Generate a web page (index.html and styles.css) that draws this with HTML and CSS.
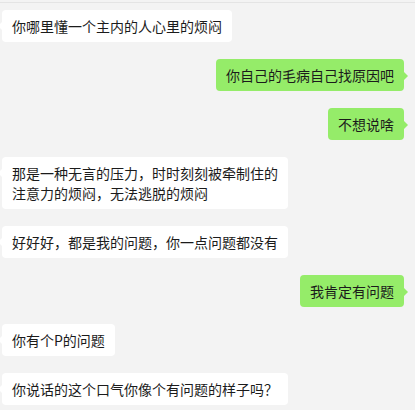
FILE: index.html
```html
<!DOCTYPE html>
<html lang="zh-CN">
<head>
    <meta charset="UTF-8">
    <meta name="viewport" content="width=device-width, initial-scale=1.0">
    <title>聊天记录</title>
    <link rel="stylesheet" href="styles.css">
</head>
<body>
    <div class="chat">
        <div class="row left"><div class="bubble">你哪里懂一个主内的人心里的烦闷</div></div>
        <div class="row right"><div class="bubble">你自己的毛病自己找原因吧</div></div>
        <div class="row right"><div class="bubble">不想说啥</div></div>
        <div class="row left"><div class="bubble">那是一种无言的压力，时时刻刻被牵制住的注意力的烦闷，无法逃脱的烦闷</div></div>
        <div class="row left"><div class="bubble">好好好，都是我的问题，你一点问题都没有</div></div>
        <div class="row right"><div class="bubble">我肯定有问题</div></div>
        <div class="row left"><div class="bubble">你有个P的问题</div></div>
        <div class="row left"><div class="bubble">你说话的这个口气你像个有问题的样子吗？</div></div>
    </div>
</body>
</html>
```

FILE: styles.css
```css
body {
    margin: 0;
    padding: 0;
    background-color: #f3f3f3;
    font-family: "Noto Sans CJK SC", "Microsoft YaHei", sans-serif;
    font-size: 14px;
    color: #1b1b1b;
    overflow: hidden;
}
.chat {
    display: flex;
    flex-direction: column;
    gap: 17px;
    padding: 10px 11px 0 2px;
    border-top: 1px solid #e4e4e4;
    margin-top: 2px;
    padding-top: 7px;
}
.row {
    display: flex;
}
.row.right {
    justify-content: flex-end;
}
.bubble {
    position: relative;
    max-width: 266px;
    padding: 6px 10px 6px 10px;
    line-height: 20px;
    border-radius: 4px;
    background: #ffffff;
}
.left .bubble::before {
    content: "";
    position: absolute;
    left: -4px;
    top: 12px;
    border-top: 4px solid transparent;
    border-bottom: 4px solid transparent;
    border-right: 4px solid #ffffff;
}
.right .bubble {
    background: #95ec69;
}
.right .bubble::after {
    content: "";
    position: absolute;
    right: -4px;
    top: 13px;
    border-top: 4px solid transparent;
    border-bottom: 4px solid transparent;
    border-left: 4px solid #95ec69;
}
```
